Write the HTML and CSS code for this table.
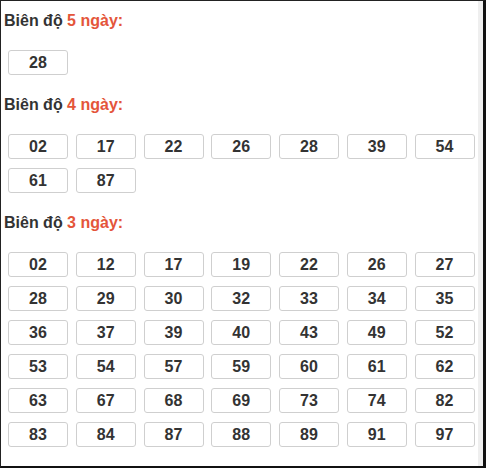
FILE: index.html
```html
<!DOCTYPE html>
<html lang="vi">
<head>
<meta charset="utf-8">
<title>Biên độ</title>
<link rel="stylesheet" href="styles.css">
</head>
<body>
<div class="frame">
  <div class="content">
    <h3 class="title">Biên độ <span class="hl">5 ngày:</span></h3>
    <div class="grid">
      <div class="num">28</div>
    </div>

    <h3 class="title">Biên độ <span class="hl">4 ngày:</span></h3>
    <div class="grid">
      <div class="num">02</div><div class="num">17</div><div class="num">22</div><div class="num">26</div><div class="num">28</div><div class="num">39</div><div class="num">54</div>
      <div class="num">61</div><div class="num">87</div>
    </div>

    <h3 class="title">Biên độ <span class="hl">3 ngày:</span></h3>
    <div class="grid">
      <div class="num">02</div><div class="num">12</div><div class="num">17</div><div class="num">19</div><div class="num">22</div><div class="num">26</div><div class="num">27</div>
      <div class="num">28</div><div class="num">29</div><div class="num">30</div><div class="num">32</div><div class="num">33</div><div class="num">34</div><div class="num">35</div>
      <div class="num">36</div><div class="num">37</div><div class="num">39</div><div class="num">40</div><div class="num">43</div><div class="num">49</div><div class="num">52</div>
      <div class="num">53</div><div class="num">54</div><div class="num">57</div><div class="num">59</div><div class="num">60</div><div class="num">61</div><div class="num">62</div>
      <div class="num">63</div><div class="num">67</div><div class="num">68</div><div class="num">69</div><div class="num">73</div><div class="num">74</div><div class="num">82</div>
      <div class="num">83</div><div class="num">84</div><div class="num">87</div><div class="num">88</div><div class="num">89</div><div class="num">91</div><div class="num">97</div>
    </div>
  </div>
  <div class="strip"></div>
</div>
</body>
</html>
```

FILE: styles.css
```css
* { box-sizing: border-box; }
html, body { margin: 0; padding: 0; background: #fff; }
body { font-family: "Liberation Sans", Arial, sans-serif; color: #333; }

.frame {
  width: 486px;
  height: 468px;
  display: flex;
  border-top: 1px solid #222;
  border-left: 1px solid #222;
  border-right: 3px solid #111;
  border-bottom: 2px solid #111;
  overflow: hidden;
}

.content {
  flex: 1;
  padding: 10px 0 0 3px;
}

.strip {
  width: 5px;
  background: #efefef;
}

.title {
  margin: 0;
  font-size: 16px;
  line-height: 19px;
  font-weight: bold;
  color: #333;
}

.hl { color: #e4553a; }

.grid {
  display: grid;
  grid-template-columns: repeat(7, 60px);
  grid-auto-rows: 25px;
  column-gap: 7.75px;
  row-gap: 9px;
  margin: 20px 0 20px 4px;
}

.num {
  border: 1px solid #cfcfcf;
  border-radius: 3px;
  display: flex;
  align-items: center;
  justify-content: center;
  font-size: 16px;
  font-weight: bold;
  color: #333;
}
```
